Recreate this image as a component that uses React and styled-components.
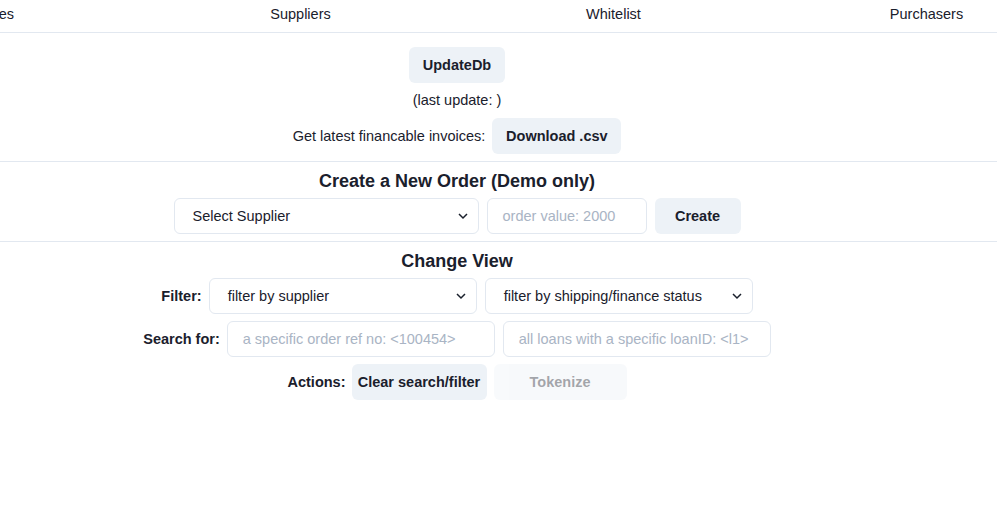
import styled, { createGlobalStyle } from "styled-components";

const GlobalStyle = createGlobalStyle`
  html, body {
    margin: 0;
    background: #FFFFFF;
    overflow: hidden;
  }
  body {
    font-family: "Liberation Sans", Arial, sans-serif;
    color: #1A202C;
  }
`

const PageStyled = styled.div`
  width: 1252px;
  margin-left: -169px;
`
const NavStyled = styled.nav`
  display: grid;
  grid-template-columns: repeat(4, 1fr);
  border-bottom: 1px solid #E2E8F0;
`
const TabStyled = styled.div`
  text-align: center;
  font-size: 14.5px;
  line-height: 18px;
  padding: 5px 0 9px;
`
const SectionStyled = styled.section`
  display: flex;
  flex-direction: column;
  align-items: center;
  gap: ${(p) => p.$gap || 5}px;
  padding: ${(p) => p.$top || 7}px 0 7px;
  border-top: ${(p) => (p.$line ? "1px solid #E2E8F0" : "none")};
`
const HeadingStyled = styled.h2`
  margin: 0;
  font-size: 18px;
  font-weight: 700;
  line-height: 24px;
`
const TextStyled = styled.p`
  margin: 0;
  font-size: 14.5px;
  line-height: 20px;
`
const RowStyled = styled.div`
  display: flex;
  align-items: center;
  gap: ${(p) => p.$gap || 8}px;
  margin-top: ${(p) => p.$push || 0}px;
`
const RowsStyled = styled.div`
  display: flex;
  flex-direction: column;
  align-items: center;
  gap: 7px;
`
const LabelStyled = styled.span`
  font-size: 14.5px;
  font-weight: 700;
  margin-right: -1px;
`
const ButtonStyled = styled.button`
  height: 36px;
  width: ${(p) => p.$w}px;
  padding: 0;
  border: none;
  border-radius: 6px;
  background: #EDF2F7;
  color: #1A202C;
  font-family: inherit;
  font-size: 14.5px;
  font-weight: 700;
  opacity: ${(p) => (p.disabled ? 0.4 : 1)};
`
const FieldStyled = styled.div`
  position: relative;
  box-sizing: border-box;
  height: 36px;
  width: ${(p) => p.$w}px;
  border: 1px solid #E2E8F0;
  border-radius: 6px;
  display: flex;
  align-items: center;
  padding-left: ${(p) => p.$pad || 18}px;
  font-size: 14.5px;
  color: ${(p) => (p.$placeholder ? "#A9B4C4" : "#1A202C")};
  white-space: nowrap;
`
const ChevronStyled = styled.svg`
  position: absolute;
  right: 10px;
  top: 50%;
  margin-top: -5px;
`

const Chevron = () => (
  <ChevronStyled width="10" height="10" viewBox="0 0 10 10">
    <path d="M1 3 L5 7 L9 3" fill="none" stroke="#1A202C" strokeWidth="1.5" />
  </ChevronStyled>
)

const Select = ({ w, pad, children }) => (
  <FieldStyled $w={w} $pad={pad}>
    {children}
    <Chevron />
  </FieldStyled>
)

export default function App() {
  return (
    <PageStyled>
      <GlobalStyle />
      <NavStyled>
        <TabStyled>Invoices</TabStyled>
        <TabStyled>Suppliers</TabStyled>
        <TabStyled>Whitelist</TabStyled>
        <TabStyled>Purchasers</TabStyled>
      </NavStyled>

      <SectionStyled $top={14} $gap={7}>
        <ButtonStyled $w={96}>UpdateDb</ButtonStyled>
        <TextStyled>(last update: )</TextStyled>
        <RowStyled $gap={7} $push={1}>
          <TextStyled>Get latest financable invoices:</TextStyled>
          <ButtonStyled $w={129}>Download .csv</ButtonStyled>
        </RowStyled>
      </SectionStyled>

      <SectionStyled $line>
        <HeadingStyled>Create a New Order (Demo only)</HeadingStyled>
        <RowStyled>
          <Select w={305}>Select Supplier</Select>
          <FieldStyled $w={160} $pad={15} $placeholder>order value: 2000</FieldStyled>
          <ButtonStyled $w={86}>Create</ButtonStyled>
        </RowStyled>
      </SectionStyled>

      <SectionStyled $line>
        <HeadingStyled>Change View</HeadingStyled>
        <RowsStyled>
          <RowStyled>
            <LabelStyled>Filter:</LabelStyled>
            <Select w={268}>filter by supplier</Select>
            <Select w={268}>filter by shipping/finance status</Select>
          </RowStyled>
          <RowStyled>
            <LabelStyled>Search for:</LabelStyled>
            <FieldStyled $w={268} $pad={15} $placeholder>a specific order ref no: &lt;100454&gt;</FieldStyled>
            <FieldStyled $w={268} $pad={15} $placeholder>all loans with a specific loanID: &lt;l1&gt;</FieldStyled>
          </RowStyled>
          <RowStyled $gap={7}>
            <LabelStyled>Actions:</LabelStyled>
            <ButtonStyled $w={135}>Clear search/filter</ButtonStyled>
            <ButtonStyled $w={133} disabled>Tokenize</ButtonStyled>
          </RowStyled>
        </RowsStyled>
      </SectionStyled>
    </PageStyled>
  );
}
